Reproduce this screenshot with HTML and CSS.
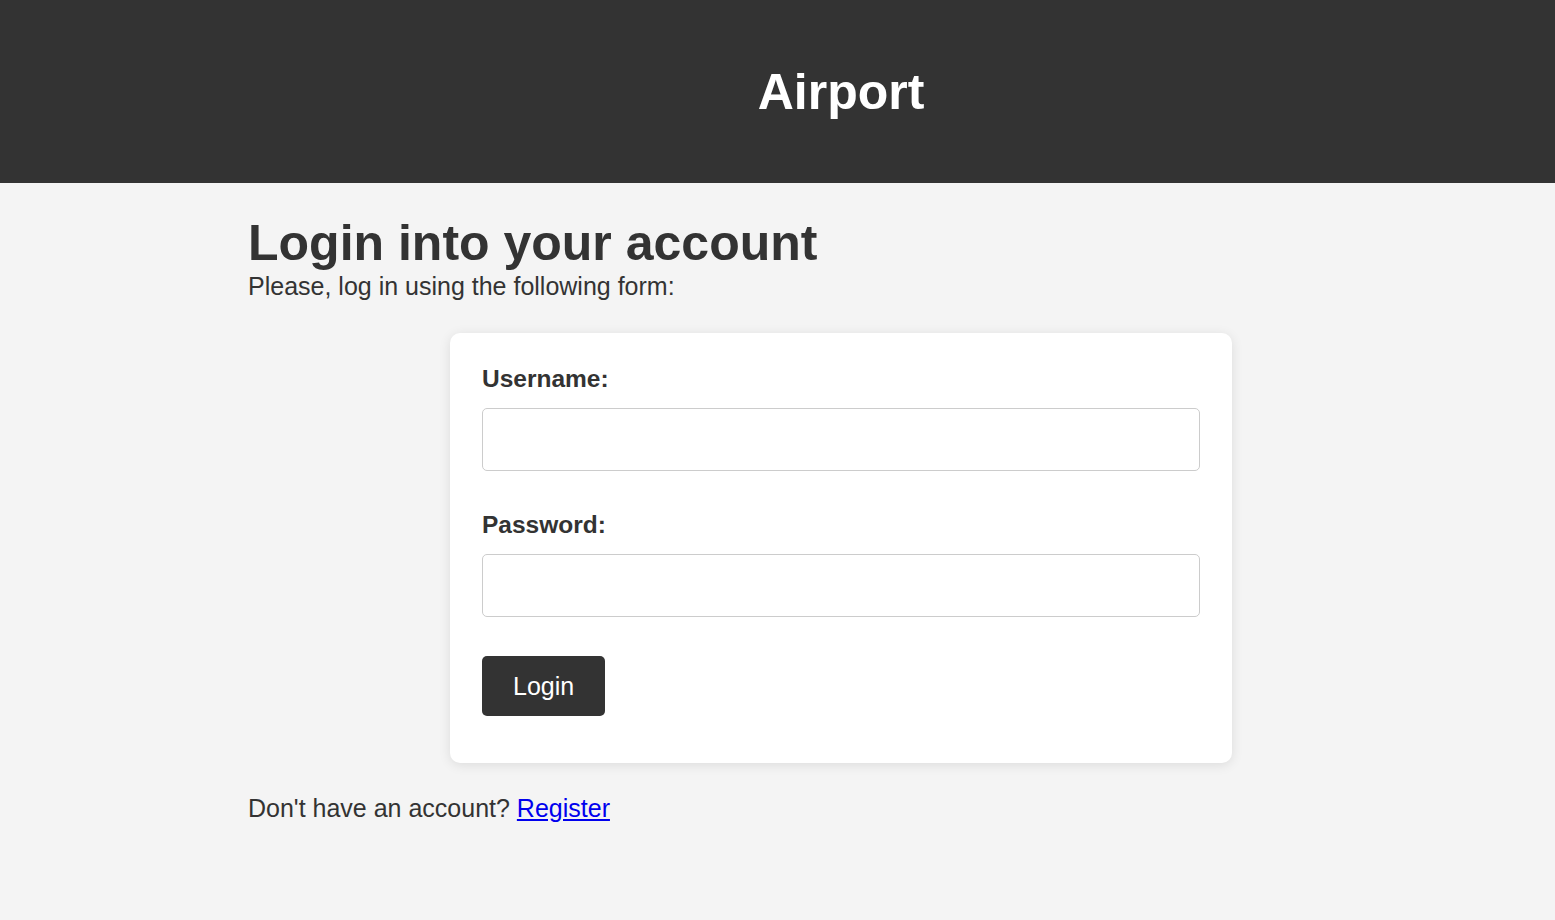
FILE: index.html
```html
<!DOCTYPE html>
<html lang="en">
<head>
<meta charset="utf-8">
<title>Airport - Login</title>
<link rel="stylesheet" href="styles.css">
</head>
<body>
<header class="site-header">
  <div class="container header-inner">
    <h1 class="brand">Airport</h1>
  </div>
</header>
<main class="container main">
  <h2 class="page-title">Login into your account</h2>
  <p class="intro">Please, log in using the following form:</p>
  <form class="card" action="#" method="post">
    <div class="field">
      <label class="label" for="username">Username:</label>
      <input class="input" type="text" id="username" name="username">
    </div>
    <div class="field">
      <label class="label" for="password">Password:</label>
      <input class="input" type="password" id="password" name="password">
    </div>
    <div class="actions">
      <button class="btn" type="submit">Login</button>
    </div>
  </form>
  <p class="register">Don't have an account? <a href="#">Register</a></p>
</main>
</body>
</html>
```

FILE: styles.css
```css
* { box-sizing: border-box; }

body {
  margin: 0;
  background: #f4f4f4;
  color: #333;
  font-family: "Liberation Sans", Arial, sans-serif;
  font-size: 25px;
}

.container {
  width: 1186px;
  margin-left: 248px;
}

.site-header {
  background: #333;
  height: 183px;
  display: flex;
  align-items: center;
}

.header-inner {
  display: flex;
  justify-content: center;
}

.brand {
  margin: 0;
  color: #fff;
  font-size: 50px;
  font-weight: bold;
  line-height: normal;
}

.main {
  padding-top: 31px;
}

.page-title {
  margin: 0;
  font-size: 50px;
  font-weight: bold;
  line-height: normal;
}

.intro {
  margin: 0 0 32px;
  line-height: normal;
}

.card {
  width: 782px;
  margin: 0 auto;
  background: #fff;
  border-radius: 10px;
  box-shadow: 0 2px 12px rgba(0, 0, 0, 0.1);
  padding: 32px 32px 47px;
  display: flex;
  flex-direction: column;
  gap: 40px;
}

.field {
  display: flex;
  flex-direction: column;
  gap: 15px;
}

.label {
  font-weight: bold;
  font-size: 24.5px;
  line-height: 28px;
  color: #333;
}

.input {
  width: 100%;
  height: 63px;
  border: 1px solid #ccc;
  border-radius: 5px;
  background: #fff;
  font: inherit;
  padding: 0 12px;
}

.actions {
  display: flex;
  margin-top: -1px;
}

.btn {
  background: #333;
  color: #fff;
  border: none;
  border-radius: 5px;
  font-family: inherit;
  font-size: 25px;
  line-height: 28px;
  padding: 16px 31px;
  cursor: pointer;
}

.register {
  margin: 31px 0 0;
  line-height: normal;
}

.register a {
  color: #0000ee;
}
```
